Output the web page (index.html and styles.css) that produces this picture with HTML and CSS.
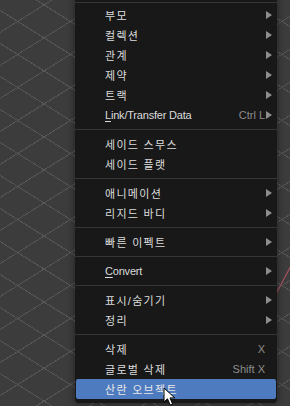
FILE: index.html
```html
<!doctype html>
<html lang="ko">
  <head>
    <meta charset="UTF-8" />
    <title>Object Menu</title>
    <link rel="stylesheet" href="styles.css">
  </head>
  <body>
    <div class="viewport">
      <svg class="axis" width="290" height="406" viewBox="0 0 290 406">
        <line x1="276" y1="294" x2="293" y2="262" stroke="#a24f5c" stroke-width="1.2" />
      </svg>

      <div class="menu">
        <div class="sep sep-top"></div>
        <div class="item"><span class="label">부모</span><span class="arrow"></span></div>
        <div class="item"><span class="label">컬렉션</span><span class="arrow"></span></div>
        <div class="item"><span class="label">관계</span><span class="arrow"></span></div>
        <div class="item"><span class="label">제약</span><span class="arrow"></span></div>
        <div class="item"><span class="label">트랙</span><span class="arrow"></span></div>
        <div class="item"><span class="label en"><u>L</u>ink/Transfer Data</span><span class="key">Ctrl L</span><span class="arrow"></span></div>
        <div class="sep"></div>
        <div class="item"><span class="label">세이드 스무스</span></div>
        <div class="item"><span class="label">세이드 플랫</span></div>
        <div class="sep"></div>
        <div class="item"><span class="label">애니메이션</span><span class="arrow"></span></div>
        <div class="item"><span class="label">리지드 바디</span><span class="arrow"></span></div>
        <div class="sep"></div>
        <div class="item"><span class="label">빠른 이펙트</span><span class="arrow"></span></div>
        <div class="sep"></div>
        <div class="item"><span class="label en"><u>C</u>onvert</span><span class="arrow"></span></div>
        <div class="sep"></div>
        <div class="item"><span class="label">표시/숨기기</span><span class="arrow"></span></div>
        <div class="item"><span class="label">정리</span><span class="arrow"></span></div>
        <div class="sep"></div>
        <div class="item"><span class="label">삭제</span><span class="key key-end">X</span></div>
        <div class="item"><span class="label">글로벌 삭제</span><span class="key key-end">Shift X</span></div>
        <div class="item active"><span class="label">산란 오브젝트</span></div>
      </div>

      <!-- mouse pointer -->
      <svg class="cursor" width="14" height="20" viewBox="0 0 14 20">
        <path d="M1 1 L1 15 L4.5 11.8 L7.2 18 L9.6 17 L7 10.9 L11.8 10.9 Z" fill="#ffffff" stroke="#000000" stroke-width="1" stroke-linejoin="round" />
      </svg>
    </div>
  </body>
</html>
```

FILE: styles.css
```css
* {
  margin: 0;
  padding: 0;
  box-sizing: border-box;
}
body {
  width: 290px;
  height: 406px;
  overflow: hidden;
  background: #3c3c3c;
  font-family: "Liberation Sans", "Noto Sans CJK KR", sans-serif;
  font-size: 11px;
}
.viewport {
  position: relative;
  width: 290px;
  height: 406px;
  background-color: #3c3c3c;
  background-image:
    repeating-linear-gradient(32deg, transparent 0 27px, #555555 27px 28px),
    repeating-linear-gradient(148deg, transparent 0 27px, #555555 27px 28px);
}
.axis {
  position: absolute;
  left: 0;
  top: 0;
}
.menu {
  position: relative;
  width: 202px;
  margin-left: 75px;
  padding-bottom: 4px;
  background: #181818;
  border-radius: 0 0 4px 4px;
  box-shadow: 0 0 6px 2px rgba(0, 0, 0, 0.3);
}
.item {
  display: flex;
  align-items: center;
  height: 20px;
  padding-left: 30px;
  padding-right: 5px;
  color: #dcdcdc;
  white-space: nowrap;
}
.item .label {
  flex: 1;
  letter-spacing: 1.3px;
}
.item .en {
  letter-spacing: -0.2px;
}
.item u {
  text-decoration-thickness: 1px;
  text-underline-offset: 2px;
}
.key {
  color: #8c8c8c;
}
.key-end {
  margin-right: 7px;
}
.arrow {
  width: 0;
  height: 0;
  margin-left: 1px;
  border-top: 4px solid transparent;
  border-bottom: 4px solid transparent;
  border-left: 6px solid #8e8e8e;
}
.active {
  margin: 0 1px;
  padding-left: 29px;
  background: #4e7bbf;
  color: #e8e8e8;
  border-radius: 2px;
}
.sep {
  height: 9px;
  display: flex;
  align-items: center;
}
.sep::after {
  content: "";
  flex: 1;
  height: 1px;
  background: #353535;
}
.sep-top {
  height: 5px;
}
.cursor {
  position: absolute;
  left: 163px;
  top: 387px;
}
```
